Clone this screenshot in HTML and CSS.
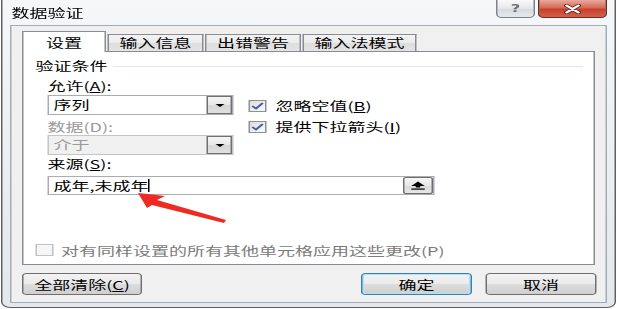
FILE: index.html
```html
<!DOCTYPE html>
<html lang="zh-CN">
<head>
    <meta charset="UTF-8">
    <meta name="viewport" content="width=device-width, initial-scale=1.0">
    <title>数据验证</title>
    <link rel="stylesheet" href="styles.css">
</head>
<body>
    <div class="screen">
        <div class="dialog">
            <div class="titlebar">
                <span class="title">数据验证</span>
                <div class="caption-buttons">
                    <span class="cap-btn help">?</span>
                    <span class="cap-btn close">
                        <svg width="12" height="10" viewBox="0 0 12 10">
                            <path d="M2 1.5 L10 8.5 M10 1.5 L2 8.5" stroke="#5a2a22" stroke-width="3.4" stroke-linecap="round"/>
                            <path d="M2 1.5 L10 8.5 M10 1.5 L2 8.5" stroke="#ffffff" stroke-width="1.8" stroke-linecap="round"/>
                        </svg>
                    </span>
                </div>
            </div>

            <div class="client">
                <div class="tabs">
                    <span class="tab active">设置</span>
                    <span class="tab">输入信息</span>
                    <span class="tab">出错警告</span>
                    <span class="tab">输入法模式</span>
                </div>

                <div class="panel">
                    <div class="group-title">
                        <span>验证条件</span>
                        <span class="rule"></span>
                    </div>

                    <div class="criteria">
                        <div class="fields">
                            <div class="field-label">允许(<u>A</u>):</div>
                            <div class="combo">
                                <span class="combo-value">序列</span>
                                <span class="combo-btn"><i class="tri"></i></span>
                            </div>
                            <div class="field-label disabled">数据(D):</div>
                            <div class="combo disabled">
                                <span class="combo-value">介于</span>
                                <span class="combo-btn"><i class="tri"></i></span>
                            </div>
                        </div>
                        <div class="options">
                            <label class="check-row">
                                <span class="checkbox">
                                    <svg width="10" height="10" viewBox="0 0 10 10"><path d="M1.5 5 L4 7.5 L8.5 2" fill="none" stroke="#3f5fa6" stroke-width="1.6"/></svg>
                                </span>
                                忽略空值(<u>B</u>)
                            </label>
                            <label class="check-row">
                                <span class="checkbox">
                                    <svg width="10" height="10" viewBox="0 0 10 10"><path d="M1.5 5 L4 7.5 L8.5 2" fill="none" stroke="#3f5fa6" stroke-width="1.6"/></svg>
                                </span>
                                提供下拉箭头(<u>I</u>)
                            </label>
                        </div>
                    </div>

                    <div class="field-label source-label">来源(<u>S</u>):</div>
                    <div class="source">
                        <span class="source-text">成年,未成年<i class="caret"></i></span>
                        <span class="ref-btn">
                            <svg width="10" height="9" viewBox="0 0 10 9">
                                <path d="M5 0.5 L9.5 5 L0.5 5 Z" fill="#000"/>
                                <rect x="3.5" y="4.5" width="3" height="2" fill="#000"/>
                                <rect x="0.5" y="7.5" width="9" height="1.2" fill="#000"/>
                            </svg>
                        </span>
                    </div>

                    <label class="check-row apply-all">
                        <span class="checkbox off"></span>
                        对有同样设置的所有其他单元格应用这些更改(P)
                    </label>
                </div>

                <div class="footer">
                    <button class="btn wide">全部清除(<u>C</u>)</button>
                    <div class="footer-right">
                        <button class="btn default">确定</button>
                        <button class="btn">取消</button>
                    </div>
                </div>
            </div>
        </div>

        <svg class="arrow" width="620" height="309" viewBox="0 0 620 309">
            <polygon points="138,193 165,196 157,200 226,220 224,223 152,205 147,208" fill="#ee2a22"/>
        </svg>
    </div>
</body>
</html>
```

FILE: styles.css
```css
* {
    box-sizing: border-box;
}

body {
    margin: 0;
    background: #ffffff;
    font-family: "Noto Sans CJK SC", "Noto Sans", sans-serif;
    font-size: 12px;
    color: #000000;
}

.screen {
    position: relative;
    width: 620px;
    height: 309px;
    overflow: hidden;
}

/* the capture is stretched sideways, so the dialog is drawn at its own size and widened */
.dialog {
    width: 410px;
    margin-left: 1px;
    transform: scaleX(1.5);
    transform-origin: 0 0;
    display: flex;
    flex-direction: column;
    padding: 0 5px 4px 5px;
    background: linear-gradient(#f5f7f9, #e3e8ed);
    border: 1px solid #5c5f63;
    border-top: none;
    border-radius: 0 0 6px 6px;
}

.titlebar {
    height: 25px;
    display: flex;
    justify-content: space-between;
    align-items: flex-start;
}

.title {
    line-height: 26px;
    padding-left: 1px;
}

.caption-buttons {
    display: flex;
    gap: 2px;
}

.cap-btn {
    display: flex;
    align-items: center;
    justify-content: center;
    height: 18px;
    border: 1px solid #7c8289;
    border-top: none;
    border-radius: 0 0 4px 4px;
}

.cap-btn.help {
    width: 26px;
    background: linear-gradient(#f8f9fa, #e4e7ea 50%, #d5d9dd 51%, #e6e9ec);
    color: #6d7176;
    font-family: "DejaVu Sans", sans-serif;
    font-weight: bold;
    font-size: 11px;
    line-height: 1;
}

.cap-btn.close {
    width: 46px;
    background: linear-gradient(#e9a99d, #d66a58 45%, #c8402b 55%, #d2614c);
    border-color: #6b2b22;
}

.client {
    height: 278px;
    display: flex;
    flex-direction: column;
    padding: 5px 7px 0 7px;
    background: #f0f0f0;
    border: 1px solid #a5acb5;
}

.tabs {
    display: flex;
    align-items: flex-end;
    height: 20px;
    position: relative;
    z-index: 1;
}

.tab {
    height: 17px;
    line-height: 16px;
    padding: 0 7px;
    border: 1px solid #898c95;
    border-bottom: none;
    margin-right: 1px;
    background: linear-gradient(#f3f3f3, #ebebeb 50%, #dddddd 51%, #e4e4e4);
}

.tab.active {
    height: 21px;
    line-height: 22px;
    padding: 0 15px;
    margin-bottom: -1px;
    background: #ffffff;
}

.panel {
    height: 214px;
    padding: 7px 7px 0 8px;
    background: #ffffff;
    border: 1px solid #898c95;
}

.group-title {
    display: flex;
    align-items: center;
    height: 14px;
    line-height: 14px;
}

.rule {
    flex: 1;
    height: 1px;
    margin-left: 4px;
    background: #dde5ee;
}

.criteria {
    display: flex;
    margin-top: 5px;
    padding-left: 8px;
}

.fields {
    width: 124px;
}

.field-label {
    height: 16px;
    line-height: 16px;
}

.field-label.disabled {
    margin-top: 4px;
    color: #9a9a9a;
}

.combo {
    display: flex;
    height: 20px;
    margin-top: 1px;
    border: 1px solid #a9acb3;
    background: #ffffff;
}

.combo.disabled {
    margin-top: 0;
    background: #f0f0f0;
    color: #9a9a9a;
    border-color: #c5c5c5;
}

.combo-value {
    flex: 1;
    line-height: 18px;
    padding-left: 3px;
}

.combo-btn {
    display: flex;
    align-items: center;
    justify-content: center;
    width: 17px;
    border: 1px solid #707070;
    background: linear-gradient(#f4f4f4, #e6e6e6 50%, #d6d6d6 51%, #e0e0e0);
}

.tri {
    width: 0;
    height: 0;
    border-left: 3px solid transparent;
    border-right: 3px solid transparent;
    border-top: 3px solid #000000;
}

.options {
    margin-left: 10px;
    padding-top: 17px;
}

.check-row {
    display: flex;
    align-items: center;
    height: 21px;
}

.checkbox {
    display: flex;
    align-items: center;
    justify-content: center;
    width: 12px;
    height: 12px;
    margin-right: 6px;
    border: 1px solid #8e8f8f;
    background: linear-gradient(135deg, #dcdcdc, #fbfbfb);
}

.checkbox.off {
    margin-right: 5px;
    border-color: #c2c2c2;
    background: #f6f6f6;
}

.source-label {
    margin-top: 1px;
    padding-left: 8px;
}

.source {
    display: flex;
    align-items: center;
    width: 258px;
    height: 19px;
    margin: 4px 0 0 8px;
    padding-left: 3px;
    border: 1px solid #a9acb3;
}

.source-text {
    flex: 1;
    display: flex;
    align-items: center;
    line-height: 17px;
}

.caret {
    width: 1px;
    height: 13px;
    background: #000000;
}

.ref-btn {
    display: flex;
    align-items: center;
    justify-content: center;
    width: 20px;
    height: 17px;
    border: 1px solid #6f6f6f;
    border-radius: 2px;
    background: linear-gradient(#f6f6f6, #e8e8e8 50%, #dadada 51%, #e6e6e6);
}

.check-row.apply-all {
    height: 16px;
    margin-top: 47px;
    color: #7b7b7b;
}

.footer {
    display: flex;
    justify-content: space-between;
    margin-top: 8px;
}

.footer-right {
    display: flex;
    gap: 9px;
    margin-right: -1px;
}

.btn {
    width: 74px;
    height: 22px;
    padding: 0;
    font-family: inherit;
    font-size: 12px;
    color: #000000;
    border: 1px solid #707070;
    border-radius: 3px;
    background: linear-gradient(#f2f2f2, #ebebeb 50%, #dddddd 51%, #cfcfcf);
}

.btn.wide {
    width: 80px;
}

.btn.default {
    border-color: #3c7fb1;
    box-shadow: inset 0 0 0 1px #a9e4f7;
}

.arrow {
    position: absolute;
    left: 0;
    top: 0;
    pointer-events: none;
}
```
